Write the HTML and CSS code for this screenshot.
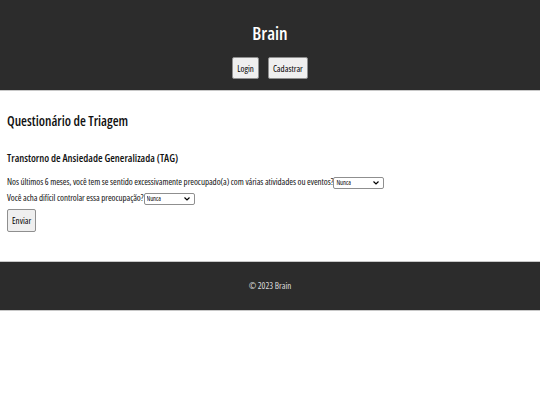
FILE: index.html
```html
<!DOCTYPE html>
<html lang="pt-BR">
<head>
    <meta charset="UTF-8">
    <meta name="viewport" content="width=device-width, initial-scale=1.0">
    <title>Brain - Questionário de Triagem</title>
    <link rel="stylesheet" href="styles.css">
</head>
<body>
    <header class="topo">
        <h1>Brain</h1>
        <nav class="menu">
            <button>Login</button>
            <button>Cadastrar</button>
        </nav>
    </header>

    <main class="conteudo">
        <h2>Questionário de Triagem</h2>
        <form id="triagem">
            <h3>Transtorno de Ansiedade Generalizada (TAG)</h3>
            <div class="pergunta">
                <label for="q1">Nos últimos 6 meses, você tem se sentido excessivamente preocupado(a) com várias atividades ou eventos?</label><select id="q1">
                    <option>Nunca</option>
                    <option>Às vezes</option>
                    <option>Frequentemente</option>
                    <option>Sempre</option>
                </select>
            </div>
            <div class="pergunta">
                <label for="q2">Você acha difícil controlar essa preocupação?</label><select id="q2">
                    <option>Nunca</option>
                    <option>Às vezes</option>
                    <option>Frequentemente</option>
                    <option>Sempre</option>
                </select>
            </div>
            <button type="submit" class="enviar">Enviar</button>
        </form>
    </main>

    <footer class="rodape">
        <p>&copy; 2023 Brain</p>
    </footer>
</body>
</html>
```

FILE: styles.css
```css
body {
    font-family: "Open Sans", "Liberation Sans", Arial, sans-serif;
    font-stretch: 75%;
    margin: 0;
    padding: 0;
    background-color: #fff;
    color: #111;
    font-size: 9px;
}
.topo {
    background-color: #2c2c2c;
    color: #fff;
    text-align: center;
    padding: 21px 0 11px;
    border-bottom: 1px solid #c8c8c8;
}
.topo h1 {
    margin: 0 0 12px;
    font-size: 18px;
    font-weight: 600;
    line-height: 24px;
}
.menu {
    display: flex;
    justify-content: center;
    gap: 9px;
}
button {
    font-family: inherit;
    font-stretch: inherit;
    font-size: 9px;
    background-color: #efefef;
    border: 1px solid #8f8f8f;
    border-radius: 2px;
    padding: 0 4px;
    height: 22px;
    color: #000;
}
.conteudo {
    padding: 21px 7px 29px;
}
.conteudo h2 {
    font-size: 13.5px;
    font-weight: 600;
    margin: 0 0 21px;
}
.conteudo h3 {
    font-size: 10.5px;
    font-weight: 600;
    margin: 0 0 9px;
}
.pergunta {
    line-height: 16px;
    letter-spacing: -0.06px;
}
/* seta do select desenhada em svg para ficar pequena */
select {
    appearance: none;
    font-family: inherit;
    font-stretch: inherit;
    font-size: 6.5px;
    letter-spacing: 0;
    width: 51px;
    height: 12px;
    padding: 0 0 0 2px;
    vertical-align: middle;
    border: 1px solid #8f8f8f;
    border-radius: 2px;
    background: #fff url("data:image/svg+xml,%3Csvg xmlns='http://www.w3.org/2000/svg' width='6' height='4' viewBox='0 0 6 4'%3E%3Cpath d='M0.5 0.5 L3 3 L5.5 0.5' fill='none' stroke='%23000' stroke-width='1.2'/%3E%3C/svg%3E") no-repeat right 4px center;
    color: #000;
}
.enviar {
    margin-top: 3px;
    padding: 0 4px;
    height: 23px;
}
.rodape {
    background-color: #2c2c2c;
    color: #ddd;
    text-align: center;
    border-top: 1px solid #c8c8c8;
    border-bottom: 1px solid #c8c8c8;
    padding: 18px 0;
    font-size: 9px;
}
.rodape p {
    margin: 0;
    line-height: 12px;
}
```
